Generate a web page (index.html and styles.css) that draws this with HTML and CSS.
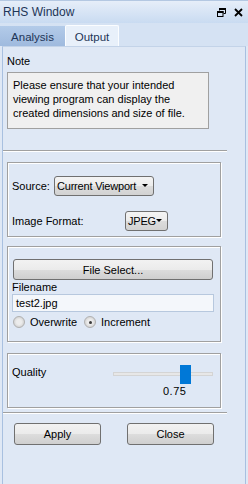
FILE: index.html
```html
<!DOCTYPE html>
<html>
<head>
<meta charset="utf-8">
<link rel="stylesheet" href="styles.css">
</head>
<body>
<div class="window">
  <div class="titlebar">
    <span class="title">RHS Window</span>
    <span class="winbtns">
      <svg class="ico" width="9" height="9" viewBox="0 0 9 9"><path d="M2.5 0.5h6v5h-2M2.5 0.5v2" fill="none" stroke="#000" stroke-width="1"/><rect x="2" y="0" width="7" height="2" fill="#000"/><rect x="0.5" y="3.5" width="5.5" height="5" fill="none" stroke="#000"/><rect x="0" y="3" width="6.5" height="2" fill="#000"/></svg>
      <svg class="ico" width="9" height="9" viewBox="0 0 9 9"><path d="M1 1L8 8M8 1L1 8" stroke="#000" stroke-width="1.8"/></svg>
    </span>
  </div>
  <div class="tabstrip">
    <div class="tab">Analysis</div>
    <div class="tab active">Output</div>
  </div>
  <div class="panel">
    <div class="label">Note</div>
    <div class="note">Please ensure that your intended viewing program can display the created dimensions and size of file.</div>
    <div class="sep sep-top"></div>
    <div class="group g1">
      <div class="row">
        <span class="lbl src">Source:</span>
        <span class="combo combo-wide">Current Viewport<i class="caret"></i></span>
      </div>
      <div class="row row2">
        <span class="lbl fmt">Image Format:</span>
        <span class="combo combo-small">JPEG<i class="caret"></i></span>
      </div>
    </div>
    <div class="group g2">
      <div class="btn wide">File Select...</div>
      <div class="label">Filename</div>
      <div class="textbox">test2.jpg</div>
      <div class="radios">
        <span class="radio"></span><span class="rlabel">Overwrite</span>
        <span class="radio checked"></span><span class="rlabel">Increment</span>
      </div>
    </div>
    <div class="group g3">
      <div class="qrow">
        <span class="lbl">Quality</span>
        <div class="slider">
          <div class="track"></div>
          <div class="thumb"></div>
        </div>
      </div>
      <div class="value">0.75</div>
    </div>
    <div class="sep sep-bottom"></div>
    <div class="actions">
      <div class="btn act">Apply</div>
      <div class="btn act">Close</div>
    </div>
  </div>
</div>
</body>
</html>
```
FILE: styles.css
```css
html, body {
  margin: 0;
  padding: 0;
}
body {
  font-family: "Liberation Sans", Arial, sans-serif;
  font-size: 11px;
  color: #000;
}
.window {
  width: 248px;
  height: 484px;
  background: #dfe8f5;
  display: flex;
  flex-direction: column;
  overflow: hidden;
}
.titlebar {
  height: 23px;
  box-sizing: border-box;
  border-top: 1px solid #b4c8e2;
  background: linear-gradient(#e6eef9, #c9dbf1);
  display: flex;
  align-items: center;
  justify-content: space-between;
  padding: 0 5px 0 3px;
}
.title {
  font-size: 12px;
  color: #1d3557;
}
.winbtns {
  display: flex;
  gap: 8px;
  align-items: center;
}
.ico { display: block; }
.tabstrip {
  height: 23px;
  background: #d5e2f3;
  display: flex;
  align-items: flex-end;
}
.tab {
  height: 20px;
  width: 65px;
  box-sizing: border-box;
  background: linear-gradient(#b3cbe9, #9fbade);
  color: #1d3557;
  font-size: 11.5px;
  display: flex;
  align-items: center;
  justify-content: center;
  padding-top: 1px;
}
.tab.active {
  width: 54px;
  height: 21px;
  background: #e8f0fa;
  border: 1px solid #fbfdff;
  border-bottom: none;
  border-radius: 2px 2px 0 0;
  color: #1d3557;
}
.panel {
  flex: 1;
  margin: 0 2px 0 2px;
  border-top: 1px solid #c3d3e8;
  border-left: 1px solid #a8c0e0;
  border-right: 1px solid #a8c0e0;
  padding: 7px 4px 0 4px;
  background: #dfe8f5;
}
.label {
  line-height: 14px;
}
.note {
  margin-top: 4px;
  width: 202px;
  box-sizing: border-box;
  background: #f0f0f0;
  border: 1px solid #a0a0a0;
  padding: 5px 4px 8px 5px;
  line-height: 14px;
}
.sep {
  margin-left: -4px;
  width: 224px;
  height: 1px;
  background: #a0a0a0;
  box-shadow: 0 1px 0 #fff;
}
.sep-top { margin-top: 21px; }
.sep-bottom { margin-top: 4px; }
.group {
  width: 214px;
  box-sizing: border-box;
  border: 1px solid #a0a0a0;
  box-shadow: inset 1px 1px 0 #fff, 1px 1px 0 #fff;
  padding: 0 4px;
}
.g1 {
  margin-top: 11px;
  padding-top: 13px;
  padding-bottom: 5px;
}
.row {
  display: flex;
  align-items: center;
  height: 20px;
}
.row2 { margin-top: 15px; }
.lbl { line-height: 14px; }
.src { width: 42px; }
.fmt { width: 113px; }
.combo {
  position: relative;
  height: 20px;
  box-sizing: border-box;
  border: 1px solid #707070;
  border-radius: 3px;
  background: linear-gradient(#f4f4f4 0%, #ececec 50%, #dcdcdc 51%, #d2d2d2 100%);
  display: flex;
  align-items: center;
  padding-left: 2px;
  letter-spacing: -0.2px;
}
.combo-wide { width: 100px; }
.combo-small { width: 43px; }
.caret {
  position: absolute;
  right: 5px;
  top: 7px;
  width: 0;
  height: 0;
  border-left: 3px solid transparent;
  border-right: 3px solid transparent;
  border-top: 3px solid #000;
}
.g2 {
  margin-top: 9px;
  padding-top: 12px;
  padding-bottom: 11px;
}
.btn {
  height: 21px;
  box-sizing: border-box;
  border: 1px solid #707070;
  border-radius: 3px;
  background: linear-gradient(#f2f2f2 0%, #ebebeb 50%, #dddddd 51%, #cfcfcf 100%);
  display: flex;
  align-items: center;
  justify-content: center;
}
.btn.wide {
  width: 200px;
  margin-left: 1px;
}
.textbox {
  width: 202px;
  height: 18px;
  box-sizing: border-box;
  background: #f4f7fb;
  border: 1px solid #b7c8de;
  padding-left: 3px;
  display: flex;
  align-items: center;
}
.radios {
  display: flex;
  align-items: center;
  height: 16px;
  margin-top: 2px;
  padding-left: 1px;
}
.radio {
  width: 12px;
  height: 12px;
  box-sizing: border-box;
  border-radius: 50%;
  border: 1px solid #b0b0b0;
  background: radial-gradient(circle, #ececec 0 35%, #d6d6d6 70%, #c4c4c4 100%);
  display: inline-flex;
  align-items: center;
  justify-content: center;
}
.radio.checked::after {
  content: "";
  width: 3px;
  height: 3px;
  border-radius: 50%;
  background: #3a3a3a;
}
.rlabel { margin-left: 5px; margin-right: 7px; }
.g3 {
  margin-top: 11px;
  padding-top: 11px;
  padding-bottom: 9px;
}
.qrow {
  display: flex;
  align-items: flex-start;
}
.qrow .lbl {
  width: 101px;
}
.slider {
  position: relative;
  width: 100px;
  height: 19px;
}
.track {
  position: absolute;
  left: 0;
  right: 0;
  top: 7px;
  height: 4px;
  box-sizing: border-box;
  background: #e7e7e7;
  border: 1px solid #d4d4d4;
}
.thumb {
  position: absolute;
  left: 67px;
  top: 0;
  width: 11px;
  height: 19px;
  background: #0078d7;
}
.value {
  line-height: 14px;
  padding-left: 151px;
  letter-spacing: 0.5px;
}
.actions {
  display: flex;
  margin-top: 10px;
  padding-left: 7px;
  gap: 26px;
}
.btn.act {
  width: 87px;
  height: 22px;
}
```
